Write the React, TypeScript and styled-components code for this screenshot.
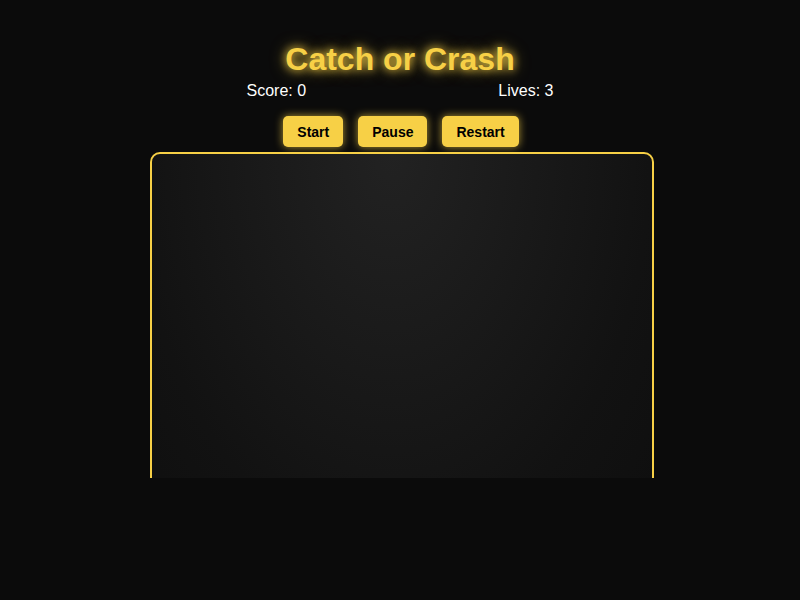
import React from 'react'
import styled, { createGlobalStyle } from 'styled-components'

const GlobalStyle = createGlobalStyle`
  html, body {
    margin: 0;
    padding: 0;
    background: #0b0b0b;
    font-family: "Liberation Sans", Arial, sans-serif;
    color: #fff;
  }
`

const App = () => {
  return (
    <>
      <GlobalStyle />
      <Page>
        <Title>Catch or Crash</Title>
        <Stats>
          <span>Score: 0</span>
          <span>Lives: 3</span>
        </Stats>
        <Controls>
          <Button>Start</Button>
          <Button>Pause</Button>
          <Button>Restart</Button>
        </Controls>
        <Viewport>
          <Board />
        </Viewport>
      </Page>
    </>
  )
}

export default App

const Page = styled.div`
  width: 100%;
  height: 600px;
  display: flex;
  flex-direction: column;
  align-items: center;
  padding-top: 41px;
  box-sizing: border-box;
`
const Title = styled.h1`
  margin: 0;
  font-size: 32px;
  font-weight: 700;
  line-height: 37px;
  color: #f7d046;
  text-shadow: 0 0 8px #f7d046, 0 0 16px rgba(247, 208, 70, 0.6);
`
const Stats = styled.div`
  width: 307px;
  display: flex;
  justify-content: space-between;
  font-size: 16px;
  line-height: 18px;
  margin-top: 4px;
`
const Controls = styled.div`
  display: flex;
  gap: 15px;
  margin-top: 16px;
  margin-left: 2px;
`
const Button = styled.button`
  height: 31px;
  padding: 0 14px;
  border: none;
  border-radius: 5px;
  background: #f7d046;
  color: #000;
  font-family: "Liberation Sans", Arial, sans-serif;
  font-size: 14px;
  font-weight: 700;
  cursor: pointer;
  box-shadow: 0 0 8px rgba(247, 208, 70, 0.7);
`
const Viewport = styled.div`
  margin-top: 5px;
  margin-left: 3px;
  height: 326px;
  overflow: hidden;
`
const Board = styled.div`
  width: 500px;
  height: 400px;
  border: 2px solid #f7d046;
  border-radius: 10px;
  background: radial-gradient(ellipse at 48% 0%, #222 0%, #1a1a1a 35%, #121212 70%, #0e0e0e 100%);
`
